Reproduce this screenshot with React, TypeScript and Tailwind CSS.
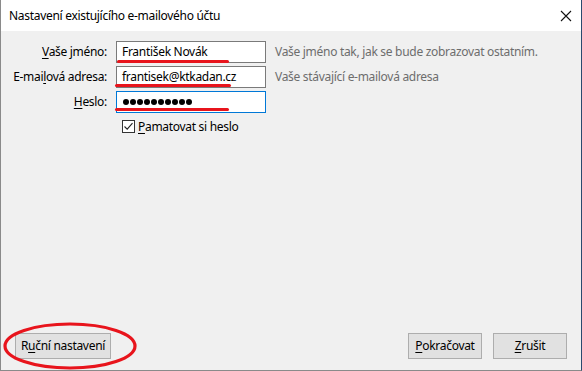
import React from "react";

const font = { fontFamily: '"Noto Sans", "Open Sans", sans-serif', letterSpacing: "-0.3px" };

function U({ children }: { children: React.ReactNode }) {
  return <span className="underline underline-offset-2 decoration-1">{children}</span>;
}

function RedLine({ left, width, top }: { left: number; width: number; top: number }) {
  return (
    <div
      className="absolute h-[3px] rounded-full bg-[#e8141c]"
      style={{ left, width, top }}
    />
  );
}

export default function App() {
  const dots = Array.from({ length: 10 });
  return (
    <div
      className="w-[582px] h-[371px] flex flex-col bg-[#f0f0f0] border-l border-b border-[#8a8a8a] border-r-[#2a4a6e] border-r text-[12px] text-black relative overflow-hidden"
      style={font}
    >
      {/* Title bar */}
      <div className="h-[31px] bg-white flex items-center justify-between pl-[8px] pr-[5px] shrink-0">
        <span className="text-[12px]">Nastavení existujícího e-mailového účtu</span>
        <svg width="14" height="14" viewBox="0 0 14 14" className="mr-[3px]">
          <path d="M2 2 L12 12 M12 2 L2 12" stroke="#111" strokeWidth="1.1" />
        </svg>
      </div>

      {/* Form */}
      <div className="flex-1 flex flex-col pt-[10px]">
        <div className="flex flex-col gap-[3px]">
          <div className="flex items-center h-[22px]">
            <div className="w-[106px] text-right">
              <U>V</U>aše jméno:
            </div>
            <div className="ml-[9px] w-[150px] h-[22px] bg-white border border-[#7a7a7a] flex items-center pl-[5px] relative">
              <span>František Novák</span>
              <RedLine left={0} width={112} top={18} />
            </div>
            <div className="ml-[9px] text-[#6d6d6d]">Vaše jméno tak, jak se bude zobrazovat ostatním.</div>
          </div>
          <div className="flex items-center h-[22px]">
            <div className="w-[106px] text-right">
              E-mai<U>l</U>ová adresa:
            </div>
            <div className="ml-[9px] w-[150px] h-[22px] bg-white border border-[#7a7a7a] flex items-center pl-[5px] relative">
              <span>frantisek@ktkadan.cz</span>
              <RedLine left={-2} width={116} top={17} />
            </div>
            <div className="ml-[9px] text-[#6d6d6d]">Vaše stávající e-mailová adresa</div>
          </div>
          <div className="flex items-center h-[22px]">
            <div className="w-[106px] text-right">
              <U>H</U>eslo:
            </div>
            <div className="ml-[9px] w-[150px] h-[22px] bg-white border border-[#0078d7] flex items-center pl-[6px] gap-[1px] relative">
              {dots.map((_, i) => (
                <span key={i} className="w-[6px] h-[6px] rounded-full bg-black" />
              ))}
              <RedLine left={-2} width={114} top={16} />
            </div>
          </div>
        </div>

        <div className="flex items-center mt-[6px] ml-[121px] h-[15px]">
          <div className="w-[13px] h-[13px] border border-[#333] bg-white flex items-center justify-center">
            <svg width="11" height="11" viewBox="0 0 11 11">
              <path d="M1.5 5.5 L4.2 8.2 L9.5 2.2" stroke="#222" strokeWidth="1.1" fill="none" />
            </svg>
          </div>
          <span className="ml-[3px]">
            <U>P</U>amatovat si heslo
          </span>
        </div>

        <div className="flex-1" />

        {/* Buttons */}
        <div className="flex items-center pb-[11px] pl-[14px] pr-[14px]">
          <button className="h-[26px] w-[96px] bg-[#e1e1e1] border border-[#adadad] text-[12px]">
            R<U>u</U>ční nastavení
          </button>
          <div className="flex-1" />
          <button className="h-[26px] w-[74px] bg-[#e1e1e1] border border-[#adadad] text-[12px]">
            <U>P</U>okračovat
          </button>
          <button className="ml-[11px] h-[26px] w-[74px] bg-[#e1e1e1] border border-[#adadad] text-[12px]">
            <U>Z</U>rušit
          </button>
        </div>
      </div>

      {/* Red annotation ellipse */}
      <svg className="absolute left-0 top-[320px] pointer-events-none" width="140" height="51" viewBox="0 0 140 51">
        <ellipse cx="69" cy="26" rx="65" ry="22" fill="none" stroke="#e8141c" strokeWidth="3.2" />
      </svg>
    </div>
  );
}
